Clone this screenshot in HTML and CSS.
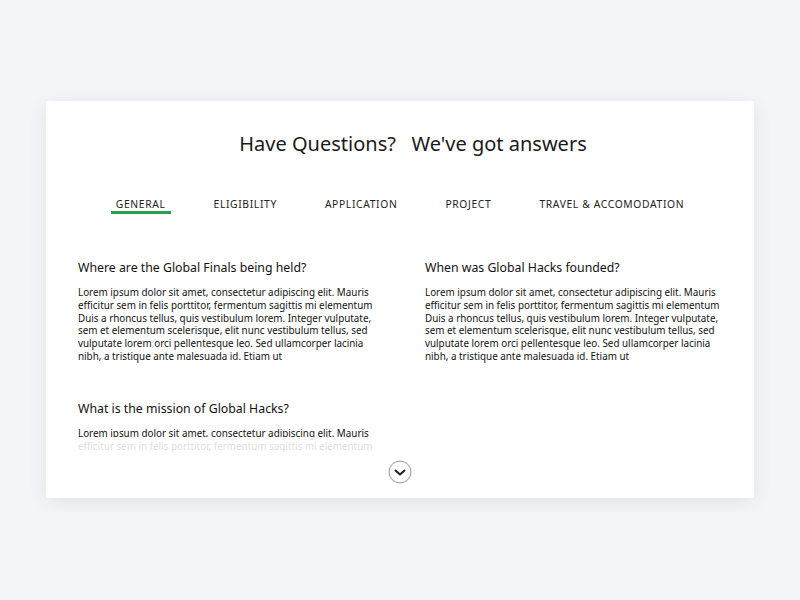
FILE: index.html
```html
<!DOCTYPE html>
<html>
<head>
<meta charset="utf-8">
<link rel="stylesheet" href="styles.css">
</head>
<body>
<div class="card">
  <h1 class="title">Have Questions?&nbsp;&nbsp; We've got answers</h1>
  <nav class="tabs">
    <span class="tab active">GENERAL</span>
    <span class="tab">ELIGIBILITY</span>
    <span class="tab">APPLICATION</span>
    <span class="tab">PROJECT</span>
    <span class="tab">TRAVEL &amp; ACCOMODATION</span>
  </nav>
  <div class="faq-wrap">
    <div class="faq">
      <div class="item">
        <h2>Where are the Global Finals being held?</h2>
        <p>Lorem ipsum dolor sit amet, consectetur adipiscing elit. Mauris efficitur sem in felis porttitor, fermentum sagittis mi elementum Duis a rhoncus tellus, quis vestibulum lorem. Integer vulputate, sem et elementum scelerisque, elit nunc vestibulum tellus, sed vulputate lorem orci pellentesque leo. Sed ullamcorper lacinia nibh, a tristique ante malesuada id. Etiam ut</p>
      </div>
      <div class="item">
        <h2>When was Global Hacks founded?</h2>
        <p>Lorem ipsum dolor sit amet, consectetur adipiscing elit. Mauris efficitur sem in felis porttitor, fermentum sagittis mi elementum Duis a rhoncus tellus, quis vestibulum lorem. Integer vulputate, sem et elementum scelerisque, elit nunc vestibulum tellus, sed vulputate lorem orci pellentesque leo. Sed ullamcorper lacinia nibh, a tristique ante malesuada id. Etiam ut</p>
      </div>
      <div class="item">
        <h2>What is the mission of Global Hacks?</h2>
        <p>Lorem ipsum dolor sit amet, consectetur adipiscing elit. Mauris efficitur sem in felis porttitor, fermentum sagittis mi elementum</p>
      </div>
    </div>
    <div class="fade"></div>
  </div>
  <div class="more">
    <span class="chev">
      <svg width="24" height="24" viewBox="0 0 24 24"><circle cx="12" cy="12" r="11" fill="#fff" stroke="#999" stroke-width="1"/><path d="M7.5 10.5 L12 14.5 L16.5 10.5" fill="none" stroke="#222" stroke-width="2" stroke-linecap="round" stroke-linejoin="round"/></svg>
    </span>
  </div>
</div>
</body>
</html>
```
FILE: styles.css
```css
html, body {
  margin: 0;
  padding: 0;
}
body {
  background: #f4f5f8;
  font-family: "Noto Sans", "Open Sans", sans-serif;
  color: #111;
  width: 800px;
  height: 600px;
  overflow: hidden;
}
.card {
  margin: 101px 0 0 46px;
  width: 708px;
  height: 397px;
  background: #fff;
  box-shadow: 0 4px 18px rgba(0, 0, 0, 0.08);
  box-sizing: border-box;
  padding: 28px 30px 0 32px;
}
.title {
  margin: 0;
  font-weight: 400;
  font-size: 20px;
  line-height: 30px;
  text-align: center;
  padding-left: 24px;
  color: #1a1a1a;
}
.tabs {
  display: flex;
  justify-content: center;
  gap: 38px;
  margin-top: 38px;
  padding-right: 2px;
}
.tab {
  font-size: 10.3px;
  letter-spacing: 0.65px;
  color: #222;
  padding: 0 5px;
  line-height: 14px;
  border-bottom: 3px solid transparent;
}
.tab.active {
  border-bottom-color: #27a04d;
}
.faq-wrap {
  position: relative;
  margin-top: 45px;
  height: 193px;
  overflow: hidden;
}
.faq {
  display: grid;
  grid-template-columns: 298px 298px;
  column-gap: 49px;
  row-gap: 37px;
}
.item h2 {
  margin: 0 0 9px 0;
  font-weight: 400;
  font-size: 12.3px;
  line-height: 18px;
  color: #111;
}
.item p {
  margin: 0;
  font-size: 9.85px;
  line-height: 12.8px;
  color: #111;
}
.fade {
  position: absolute;
  left: 0;
  right: 0;
  top: 178px;
  bottom: 0;
  background: rgba(255, 255, 255, 0.85);
}
.more {
  display: flex;
  justify-content: center;
  margin-top: 8px;
  padding-right: 2px;
}
.chev {
  display: block;
  width: 24px;
  height: 24px;
}
```
